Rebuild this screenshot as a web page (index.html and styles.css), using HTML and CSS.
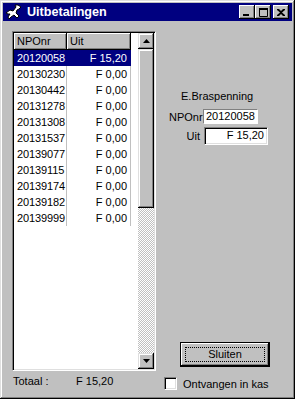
FILE: index.html
```html
<!DOCTYPE html>
<html lang="nl">

<head>
    <meta charset="UTF-8">
    <link rel="stylesheet" href="styles.css">
    <title>Uitbetalingen</title>
</head>

<body>
    <div class="window">
        <div class="titlebar">
            <svg class="app-icon" width="18" height="16" viewBox="0 0 18 16">
                <path d="M1 9 L5 6 L8 7 L11 3 L10 1 L13 1 L16 3 L14 5 L12 6 L11 9 L14 12 L12 14 L9 11 L6 13 L4 15 L3 13 L5 10 L3 10 Z" fill="#fff" stroke="#000" stroke-width="1"/>
            </svg>
            <span class="title">Uitbetalingen</span>
            <div class="caption-buttons">
                <button class="cap-btn">
                    <svg width="8" height="7" viewBox="0 0 8 7"><rect x="0" y="5" width="6" height="2" fill="#000"/></svg>
                </button>
                <button class="cap-btn">
                    <svg width="9" height="9" viewBox="0 0 9 9"><path d="M0.5 1.5 H8.5 V8.5 H0.5 Z" fill="none" stroke="#000"/><rect x="0" y="0" width="9" height="2" fill="#000"/></svg>
                </button>
                <button class="cap-btn close">
                    <svg width="8" height="7" viewBox="0 0 8 7"><path d="M0 0h2l2 2 2-2h2v1L5 3.5 8 6v1H6L4 5 2 7H0V6l3-2.5L0 1z" fill="#000"/></svg>
                </button>
            </div>
        </div>

        <div class="client">
            <div class="listview">
                <div class="columns">
                    <div class="header">
                        <div class="hcell">NPOnr</div>
                        <div class="hcell">Uit</div>
                        <div class="hfill"></div>
                    </div>
                    <div class="row selected"><span>20120058</span><span>F 15,20</span></div>
                    <div class="row"><span>20130230</span><span>F 0,00</span></div>
                    <div class="row"><span>20130442</span><span>F 0,00</span></div>
                    <div class="row"><span>20131278</span><span>F 0,00</span></div>
                    <div class="row"><span>20131308</span><span>F 0,00</span></div>
                    <div class="row"><span>20131537</span><span>F 0,00</span></div>
                    <div class="row"><span>20139077</span><span>F 0,00</span></div>
                    <div class="row"><span>20139115</span><span>F 0,00</span></div>
                    <div class="row"><span>20139174</span><span>F 0,00</span></div>
                    <div class="row"><span>20139182</span><span>F 0,00</span></div>
                    <div class="row"><span>20139999</span><span>F 0,00</span></div>
                </div>
                <div class="vscroll">
                    <div class="sbtn">
                        <svg width="7" height="4" viewBox="0 0 7 4"><path d="M3.5 0 L7 4 H0 Z" fill="#000"/></svg>
                    </div>
                    <div class="thumb"></div>
                    <div class="track"></div>
                    <div class="sbtn">
                        <svg width="7" height="4" viewBox="0 0 7 4"><path d="M0 0 H7 L3.5 4 Z" fill="#000"/></svg>
                    </div>
                </div>
            </div>

            <div class="side">
                <div class="person">E.Braspenning</div>
                <div class="fields">
                    <label>NPOnr</label>
                    <div class="field thin">20120058</div>
                    <label>Uit</label>
                    <div class="field deep">F 15,20</div>
                </div>
                <button class="btn-default"><span>Sluiten</span></button>
            </div>

            <div class="total">
                <span class="total-label">Totaal :</span>
                <span>F 15,20</span>
            </div>

            <div class="check">
                <span class="box"></span>
                <span>Ontvangen in kas</span>
            </div>
        </div>
    </div>
</body>

</html>
```

FILE: styles.css
```css
body {
    margin: 0;
    font-family: "Liberation Sans", Arial, sans-serif;
    font-size: 11px;
    color: #000;
}

.window {
    width: 295px;
    height: 399px;
    box-sizing: border-box;
    padding: 3px;
    background-color: #c0c0c0;
    box-shadow: inset -1px -1px #000, inset 1px 1px #dfdfdf, inset -2px -2px #808080, inset 2px 2px #fff;
}

.titlebar {
    height: 18px;
    background-color: #000080;
    display: flex;
    align-items: center;
    padding: 0 3px 0 2px;
}

.app-icon {
    margin-right: 4px;
}

.title {
    color: #fff;
    font-weight: bold;
    font-size: 12.6px;
    flex: 1;
}

.caption-buttons {
    display: flex;
}

.cap-btn {
    width: 16px;
    height: 14px;
    padding: 0;
    border: none;
    background-color: #c0c0c0;
    box-shadow: inset -1px -1px #000, inset 1px 1px #fff, inset -2px -2px #808080;
    display: flex;
    align-items: center;
    justify-content: center;
}

.cap-btn.close {
    margin-left: 2px;
}

.client {
    display: grid;
    grid-template-columns: 144px 1fr;
    grid-template-rows: 340px auto;
    padding: 10px 0 0 9px;
}

/* list view */

.listview {
    display: flex;
    background-color: #fff;
    border: 1px solid;
    border-color: #808080 #fff #fff #808080;
    box-shadow: inset 1px 1px #000, inset -1px -1px #dfdfdf;
    box-sizing: border-box;
    padding: 1px;
}

.columns {
    flex: 1;
}

.header {
    display: flex;
    height: 17px;
}

.hcell {
    background-color: #c0c0c0;
    box-shadow: inset -1px -1px #000, inset 1px 1px #fff, inset -2px -2px #808080;
    padding: 2px 3px 0;
    box-sizing: border-box;
}

.hcell:nth-child(1) {
    width: 53px;
}

.hcell:nth-child(2) {
    width: 64px;
}

.row {
    display: flex;
    height: 16px;
    line-height: 16px;
}

.row span {
    box-sizing: border-box;
    border-right: 1px solid #c0c0c0;
}

.row span:first-child {
    width: 53px;
    padding-left: 3px;
    letter-spacing: -0.1px;
}

.row span:last-child {
    width: 64px;
    text-align: right;
    padding-right: 3px;
}

.row.selected {
    width: 117px;
    background-color: #000080;
    color: #fff;
}

.row.selected span {
    border-right-color: #000080;
}

.vscroll {
    width: 16px;
    display: flex;
    flex-direction: column;
}

.sbtn {
    height: 16px;
    background-color: #c0c0c0;
    box-shadow: inset -1px -1px #000, inset 1px 1px #dfdfdf, inset -2px -2px #808080, inset 2px 2px #fff;
    display: flex;
    align-items: center;
    justify-content: center;
}

.thumb {
    height: 159px;
    background-color: #c0c0c0;
    box-shadow: inset -1px -1px #000, inset 1px 1px #dfdfdf, inset -2px -2px #808080, inset 2px 2px #fff;
}

.track {
    flex: 1;
    background-image: conic-gradient(#c0c0c0 25%, #fff 0 50%, #c0c0c0 0 75%, #fff 0);
    background-size: 2px 2px;
}

/* right side */

.side {
    display: flex;
    flex-direction: column;
    align-items: flex-start;
}

.person {
    margin: 59px 0 0 25px;
}

.fields {
    display: grid;
    grid-template-columns: 31px auto;
    column-gap: 3px;
    row-gap: 3px;
    align-items: center;
    margin: 7px 0 0 13px;
}

.fields label {
    text-align: right;
}

.field {
    background-color: #fff;
    box-sizing: border-box;
}

.field.thin {
    width: 55px;
    height: 15px;
    line-height: 13px;
    padding-left: 2px;
    border: 1px solid;
    border-color: #808080 #fff #fff #808080;
}

.field.deep {
    width: 64px;
    height: 18px;
    line-height: 14px;
    text-align: right;
    padding-right: 3px;
    margin-left: 1px;
    border: 1px solid;
    border-color: #808080 #fff #fff #808080;
    box-shadow: inset 1px 1px #000, inset -1px -1px #dfdfdf;
}

.btn-default {
    margin: auto 0 4px 24px;
    width: 90px;
    height: 25px;
    padding: 4px;
    border: 1px solid #000;
    background-color: #c0c0c0;
    box-shadow: inset -1px -1px #000, inset 1px 1px #fff, inset -2px -2px #808080;
    font-family: inherit;
    font-size: 11px;
    color: #000;
}

.btn-default span {
    display: block;
    height: 100%;
    box-sizing: border-box;
    border: 1px dotted #000;
    line-height: 13px;
}

/* bottom row */

.total {
    display: flex;
    margin-top: 4px;
    padding-left: 1px;
}

.total-label {
    width: 63px;
}

.check {
    display: flex;
    align-items: center;
    margin: 6px 0 0 8px;
}

.box {
    width: 13px;
    height: 13px;
    box-sizing: border-box;
    background-color: #fff;
    border: 1px solid;
    border-color: #808080 #fff #fff #808080;
    box-shadow: inset 1px 1px #000, inset -1px -1px #dfdfdf;
    margin-right: 6px;
}
```
